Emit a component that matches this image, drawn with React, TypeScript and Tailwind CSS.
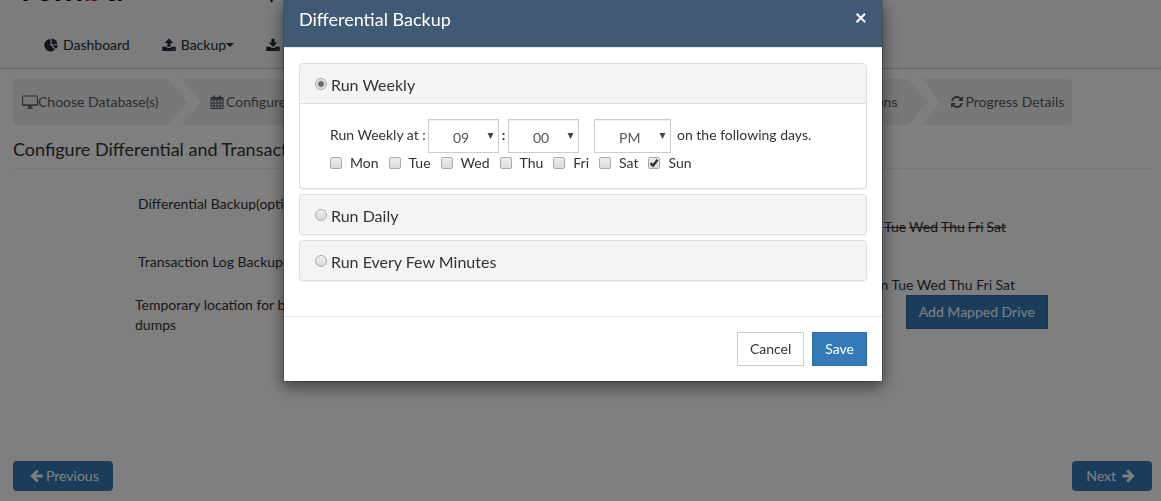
import React, { useState } from 'react';

// ── Types ─────────────────────────────────────────────────────────────────────

type Schedule = 'weekly' | 'daily' | 'minutes';

const DAYS = ['Mon', 'Tue', 'Wed', 'Thu', 'Fri', 'Sat', 'Sun'];
const HOURS = Array.from({ length: 12 }, (_, i) => String(i + 1).padStart(2, '0'));
const MINUTES = Array.from({ length: 12 }, (_, i) => String(i * 5).padStart(2, '0'));

// ── Icons ─────────────────────────────────────────────────────────────────────

const PieIcon = () => (
  <svg className="h-[14px] w-[14px]" viewBox="0 0 14 14" fill="currentColor" aria-hidden="true">
    <path d="M6.500 1v6.200l4.400 4.400A6.200 6.200 0 1 1 6.500 1z" />
    <path d="M7.600 .4a6 6 0 0 1 5.800 5.800H7.600z" />
    <path d="M8.200 7.200h5.600a6 6 0 0 1-1.700 3.900z" />
  </svg>
);

const TRAY = 'M.9 8.700h3.400l1.300 1.200h2.800l1.300-1.200h3.400a.7.7 0 0 1 .7.7v3a.7.7 0 0 1-.7.7H.9a.7.7 0 0 1-.7-.7v-3a.7.7 0 0 1 .7-.7zM9.400 11.200v.9h.9v-.9zm2 0v.9h.9v-.9z';

const UploadIcon = () => (
  <svg className="h-[14px] w-[14px]" viewBox="0 0 14 14" fill="currentColor" aria-hidden="true">
    <path d="M7 .6l4.300 4.300H8.600v3.900H5.400V4.900H2.700z" />
    <path d={TRAY} fillRule="evenodd" />
  </svg>
);

const DownloadIcon = () => (
  <svg className="h-[14px] w-[14px]" viewBox="0 0 14 14" fill="currentColor" aria-hidden="true">
    <path d="M5.400 .8h3.200v3.700h2.700L7 8.900 2.700 4.500h2.700z" />
    <path d={TRAY} fillRule="evenodd" />
  </svg>
);

const MonitorIcon = () => (
  <svg className="h-[14px] w-4" viewBox="0 0 16 14" fill="none" stroke="currentColor" aria-hidden="true">
    <path d="M1.200 1h13.600a.6.6 0 0 1 .6.6v8.800H.6V1.600a.6.6 0 0 1 .6-.6z" />
    <path d="M.6 9.900h14.800M5 13.200h6" />
    <path d="M6.500 11.800h3" strokeWidth="2.500" />
  </svg>
);

const CalendarIcon = () => (
  <svg className="h-[14px] w-[14px]" viewBox="0 0 14 14" fill="none" stroke="currentColor" aria-hidden="true">
    <path d="M1 2.500h12v11H1zM1 5h12M1 8h12M1 10.800h12M4 5v8.500M7 5v8.500M10 5v8.500" />
    <path d="M1 3.500h12" strokeWidth="2" />
    <path d="M4 .5v3M10 .5v3" strokeWidth="1.800" />
  </svg>
);

const RefreshIcon = () => (
  <svg className="h-3 w-3" viewBox="0 0 1536 1536" fill="currentColor" aria-hidden="true">
    <path d="M1511 928q0 5-1 7-64 268-268 434.500T764 1536q-146 0-282.500-55T238 1324l-129 129q-19 19-45 19t-45-19-19-45V960q0-26 19-45t45-19h448q26 0 45 19t19 45-19 45l-137 137q71 66 161 102t187 36q134 0 250-65t186-179q11-17 53-117 8-23 30-23h192q13 0 22.500 9.500t9.500 22.500zm25-800v448q0 26-19 45t-45 19h-448q-26 0-45-19t-19-45 19-45l138-138Q969 256 768 256q-134 0-250 65T332 500q-11 17-53 117-8 23-30 23H50q-13 0-22.500-9.500T18 608v-7q65-268 270-434.500T768 0q146 0 284 55.500T1297 212l130-129q19-19 45-19t45 19 19 45z" />
  </svg>
);

const ArrowIcon: React.FC<{ left?: boolean }> = ({ left }) => (
  <svg
    className={left ? 'h-[14px] w-[13px] rotate-180' : 'h-[14px] w-[13px]'}
    viewBox="0 0 13 14"
    fill="none"
    stroke="currentColor"
    strokeWidth="2.800"
    aria-hidden="true"
  >
    <path d="M1.600 7H10" strokeLinecap="round" />
    <path d="M6.300 2.600 10.700 7l-4.400 4.400" strokeLinecap="square" />
  </svg>
);

// ── Page header ───────────────────────────────────────────────────────────────

const TopBar = () => (
  <header className="border-b border-[#c8c8c8] bg-[#f8f8f8]">
    <div className="flex h-[5px] items-end overflow-hidden pl-4 text-black">
      <span className="w-[253px] text-4xl leading-none font-semibold">
        vem<span className="text-[#d0021b]">b</span>u
      </span>
      <span className="mb-1 text-[22px] leading-none">p</span>
    </div>
    <nav className="flex gap-8 pt-[30px] pb-[13px] pl-11 text-[#222d3a]">
      <a href="#dashboard" className="flex items-center gap-[5px]">
        <PieIcon />
        Dashboard
      </a>
      <a href="#backup" className="flex items-center gap-[5px]">
        <UploadIcon />
        <span className="flex items-center">
          Backup
          <span className="border-x-4 border-t-4 border-x-transparent" />
        </span>
      </a>
      <a href="#restore" aria-label="Restore" className="flex items-center">
        <DownloadIcon />
      </a>
    </nav>
  </header>
);

// ── Wizard steps ──────────────────────────────────────────────────────────────

const Chevron = () => (
  <svg className="h-[46px] w-8 shrink-0" viewBox="0 0 32 46" fill="#f0f0f0" aria-hidden="true">
    <path d="M0 0 20 23 0 46z" />
    <path d="M14 0H32V46H14L32 23z" />
  </svg>
);

const WizardSteps = () => (
  <ol className="mt-[10px] flex h-[46px] w-[93%] overflow-hidden rounded-sm text-[#555d66]">
    <li className="flex">
      <span className="flex w-[155px] items-center bg-[#f0f0f0] pl-[9px] whitespace-nowrap">
        <MonitorIcon />
        Choose Database(s)
      </span>
      <Chevron />
    </li>
    <li className="flex flex-1">
      <span className="flex flex-1 items-center gap-[2px] bg-[#f0f0f0] pl-[10px]">
        <CalendarIcon />
        Configure
      </span>
      <Chevron />
    </li>
    <li className="flex flex-1">
      <span className="flex flex-1 items-center justify-end bg-[#f0f0f0] pr-[10px]">Options</span>
      <Chevron />
    </li>
    <li className="flex items-center gap-[3px] bg-[#f0f0f0] pr-2 pl-[11px]">
      <RefreshIcon />
      Progress Details
    </li>
  </ol>
);

// ── Modal ─────────────────────────────────────────────────────────────────────

const TimeSelect: React.FC<{
  label: string;
  value: string;
  options: string[];
  wide?: boolean;
}> = ({ label, value, options, wide }) => (
  <span className="relative">
    <select
      aria-label={label}
      defaultValue={value}
      className={`block h-[34px] appearance-none border border-[#ccc] bg-white pt-[3px] pl-6 leading-7 text-[#555] shadow-[inset_0_1px_1px_rgba(0,0,0,0.075)] ${
        wide ? 'w-[77px]' : 'w-[71px]'
      }`}
    >
      {options.map(o => <option key={o}>{o}</option>)}
    </select>
    <svg
      className="pointer-events-none absolute top-[14px] right-[5px] h-[6px] w-[7px]"
      viewBox="0 0 7 6"
      fill="#444"
      aria-hidden="true"
    >
      <path d="M.5 0h6L3.500 6z" />
    </svg>
  </span>
);

const DayBox: React.FC<{ day: string }> = ({ day }) => (
  <label className="flex items-center gap-2">
    <span className="relative h-3 w-3">
      <input
        type="checkbox"
        defaultChecked={day === 'Sun'}
        className="peer block h-3 w-3 appearance-none rounded-[2px] border border-[#aaa] bg-linear-to-b from-[#eee] to-[#dadada]"
      />
      <svg
        className="pointer-events-none absolute inset-0 hidden h-3 w-3 peer-checked:block"
        viewBox="0 0 12 12"
        fill="none"
        stroke="#333"
        strokeWidth="2.400"
        aria-hidden="true"
      >
        <path d="M2.600 6.200 5 8.600 9.600 2.800" />
      </svg>
    </span>
    {day}
  </label>
);

const SchedulePanel: React.FC<{
  title: string;
  checked: boolean;
  onSelect: () => void;
  children?: React.ReactNode;
}> = ({ title, checked, onSelect, children }) => (
  <section className="overflow-hidden rounded border border-[#ddd] bg-white shadow-[0_1px_1px_rgba(0,0,0,0.05)]">
    <label className="flex gap-1 bg-[#f4f4f4] px-[15px] pt-[11px] pb-[9px] text-base leading-[19px]">
      <input
        type="radio"
        name="schedule"
        checked={checked}
        onChange={onSelect}
        className="mt-[3px] h-3 w-3 appearance-none rounded-full border border-[#aaa] bg-linear-to-b from-[#eee] to-[#dadada] checked:bg-[radial-gradient(circle,#666_0,#666_2px,#e6e6e6_4px)]"
      />
      {title}
    </label>
    {children}
  </section>
);

const BackupModal = () => {
  const [schedule, setSchedule] = useState<Schedule>('weekly');

  return (
    <div className="fixed inset-0 flex items-start justify-center bg-black/50 pl-[5px]">
      <div
        role="dialog"
        aria-labelledby="modal-title"
        className="w-[600px] border-x border-b border-black/20 bg-white bg-clip-padding shadow-[0_5px_15px_rgba(0,0,0,0.5)]"
      >
        <div className="flex items-start justify-between border-b border-[#e5e5e5] bg-[#405a73] px-[15px] pt-[5px] pb-[14px] text-white">
          <h4 id="modal-title" className="text-lg leading-7">Differential Backup</h4>
          <button type="button" aria-label="Close" className="text-[21px] leading-6 font-bold">×</button>
        </div>

        <div className="space-y-[5px] px-[15px] pt-[15px] pb-[35px]">
          <SchedulePanel
            title="Run Weekly"
            checked={schedule === 'weekly'}
            onSelect={() => setSchedule('weekly')}
          >
            {schedule === 'weekly' && (
              <div className="border-t border-[#ddd] px-[30px] py-[15px]">
                <div className="flex leading-8">
                  <span className="w-[98px]">Run Weekly at :</span>
                  <TimeSelect label="Hour" value="09" options={HOURS} />
                  <span className="w-[9px] text-center font-bold">:</span>
                  <TimeSelect label="Minute" value="00" options={MINUTES} />
                  <span className="w-[15px]" />
                  <TimeSelect label="AM or PM" value="PM" options={['AM', 'PM']} wide />
                  <span className="pl-[6px]">on the following days.</span>
                </div>
                <div className="flex gap-[10px]">
                  {DAYS.map(d => <DayBox key={d} day={d} />)}
                </div>
              </div>
            )}
          </SchedulePanel>
          <SchedulePanel
            title="Run Daily"
            checked={schedule === 'daily'}
            onSelect={() => setSchedule('daily')}
          />
          <SchedulePanel
            title="Run Every Few Minutes"
            checked={schedule === 'minutes'}
            onSelect={() => setSchedule('minutes')}
          />
        </div>

        <div className="flex justify-end gap-2 border-t border-[#e5e5e5] p-[15px]">
          <button type="button" className="border border-[#ccc] bg-white px-3 py-[6px]">Cancel</button>
          <button type="button" className="border border-[#2e6da4] bg-[#337ab7] px-3 py-[6px] text-white">Save</button>
        </div>
      </div>
    </div>
  );
};

// ── Main Page ─────────────────────────────────────────────────────────────────

const App: React.FC = () => (
  <div className="min-h-screen bg-white font-['Lato','Liberation_Sans',sans-serif] text-sm leading-5 text-[#333]">
    <TopBar />
    <main className="pr-[9px] pb-[10px] pl-[13px]">
      <WizardSteps />
      <h2 className="mt-[14px] border-b border-[#eee] pb-[9px] text-lg leading-5">
        Configure Differential and Transaction Log Backup
      </h2>

      <div className="mt-[25px] flex justify-between pr-[146px] pl-[125px]">
        <span>Differential Backup(optional)</span>
        <span className="flex gap-[3px] pt-[23px]">
          Sun
          {DAYS.slice(0, 6).map(d => <s key={d}>{d}</s>)}
        </span>
      </div>
      <div className="mt-[15px] flex justify-between pr-[137px] pl-[125px]">
        <span>Transaction Log Backup(optional)</span>
        <span className="pt-[23px]">Sun Mon Tue Wed Thu Fri Sat</span>
      </div>
      <div className="flex items-start justify-between pr-[104px] pl-[122px]">
        <span className="w-[200px]">Temporary location for backup dumps</span>
        <button type="button" className="border border-[#2e6da4] bg-[#337ab7] px-3 py-[6px] text-white">
          Add Mapped Drive
        </button>
      </div>

      <div className="mt-[126px] flex justify-between text-white">
        <button type="button" className="flex h-[30px] items-center gap-[3px] rounded bg-[#337ab7] pr-[14px] pl-[17px]">
          <ArrowIcon left />
          Previous
        </button>
        <button type="button" className="flex h-[30px] items-center gap-[6px] rounded bg-[#337ab7] pr-[17px] pl-[14px]">
          Next
          <ArrowIcon />
        </button>
      </div>
    </main>
    <BackupModal />
  </div>
);

export default App;
